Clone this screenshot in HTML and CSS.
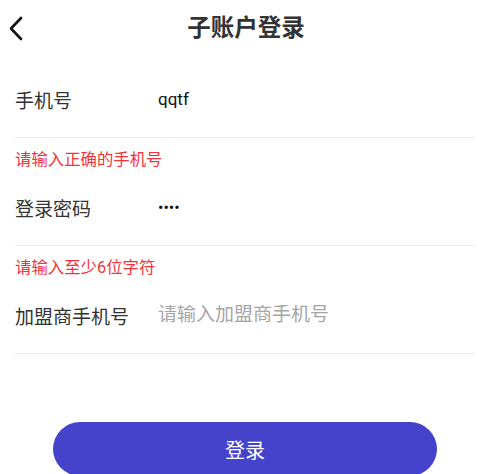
FILE: index.html
```html
<!DOCTYPE html>
<html lang="zh">
<head>
<meta charset="utf-8">
<title>子账户登录</title>
<link rel="stylesheet" href="styles.css">
</head>
<body>
<div class="page">
  <header class="header">
    <span class="back">
      <svg width="14" height="26" viewBox="0 0 14 26"><polyline points="12,2 2,12.5 12,23" fill="none" stroke="#111" stroke-width="2.6" stroke-linecap="round" stroke-linejoin="round"/></svg>
    </span>
    <h1 class="title">子账户登录</h1>
  </header>
  <form class="form">
    <div class="row">
      <label class="label">手机号</label>
      <input class="field" type="text" value="qqtf">
    </div>
    <div class="error">请输入正确的手机号</div>
    <div class="row">
      <label class="label">登录密码</label>
      <input class="field" type="password" value="1234">
    </div>
    <div class="error">请输入至少6位字符</div>
    <div class="row">
      <label class="label">加盟商手机号</label>
      <input class="field" type="text" placeholder="请输入加盟商手机号">
    </div>
    <div class="actions">
      <button class="submit" type="button">登录</button>
    </div>
  </form>
</div>
</body>
</html>
```
FILE: styles.css
```css
* { box-sizing: border-box; }
html, body { margin: 0; padding: 0; background: #fff; }
body {
  font-family: Roboto, "Noto Sans CJK SC", sans-serif;
  color: #333;
  overflow: hidden;
}
.page { width: 477px; height: 474px; overflow: hidden; }
.header {
  position: relative;
  height: 58px;
  display: flex;
  align-items: center;
  justify-content: center;
}
.back {
  position: absolute;
  left: 9px;
  top: 16px;
  display: flex;
}
.title {
  margin: 0;
  font-size: 23.5px;
  font-weight: 700;
  color: #333;
  line-height: 1;
  padding-left: 15px;
}
.form {
  margin-top: 4px;
  padding: 0 2px 0 15px;
}
.row {
  height: 76px;
  display: flex;
  align-items: center;
  border-bottom: 1px solid #ebebeb;
}
.label {
  width: 143px;
  flex: none;
  font-size: 19px;
  color: #333;
}
.field {
  flex: 1;
  border: none;
  outline: none;
  padding: 0;
  margin: 0;
  font-family: Roboto, "Noto Sans CJK SC", sans-serif;
  font-size: 17px;
  color: #111;
  background: transparent;
  margin-top: -1px;
}
.field[type="password"] { font-size: 16px; margin-top: 0; }
.field::placeholder { color: #a6a6a6; font-size: 19px; }
.error {
  padding-top: 12px;
  line-height: 20px;
  font-size: 16.4px;
  color: #f2343a;
}
.actions {
  display: flex;
  padding-top: 68px;
  padding-left: 38px;
}
.submit {
  width: 384px;
  height: 54px;
  border: none;
  border-radius: 27px;
  background: #4543cc;
  color: #fff;
  font-family: Roboto, "Noto Sans CJK SC", sans-serif;
  font-size: 20px;
  padding: 0;
}
```
